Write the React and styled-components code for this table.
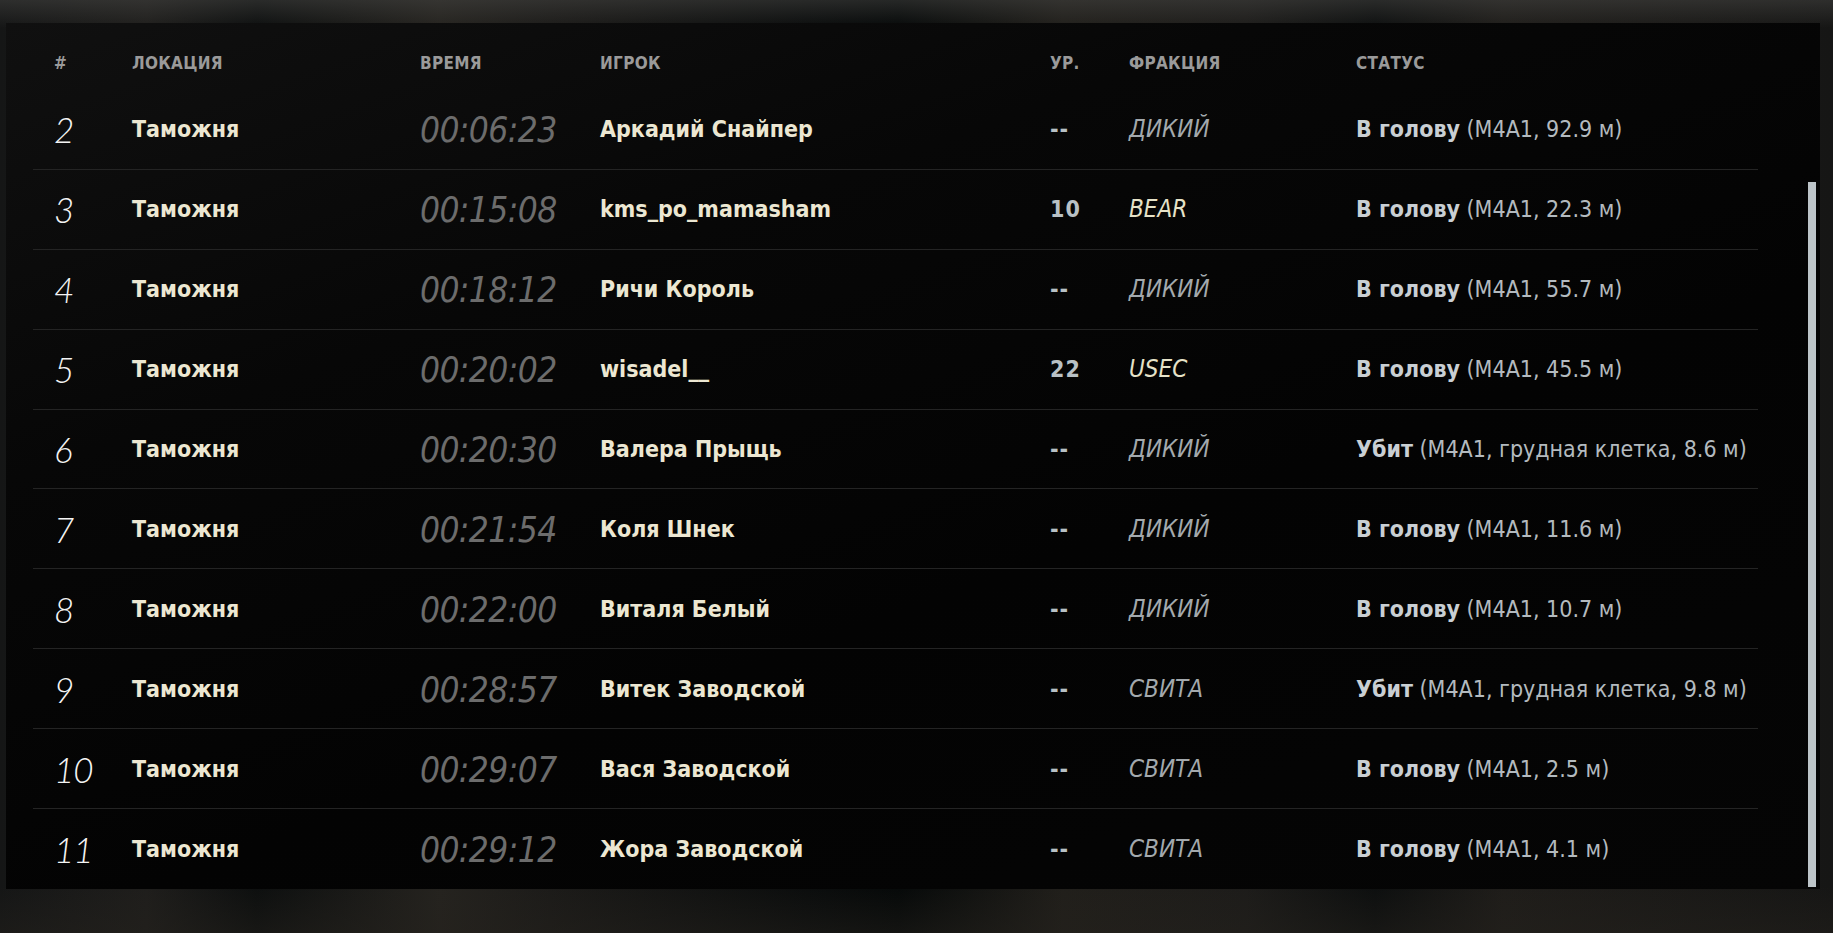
import React from 'react';
import styled, { createGlobalStyle } from 'styled-components';

const GlobalStyle = createGlobalStyle`
  html, body {
    margin: 0;
    padding: 0;
    height: 100%;
  }
  body {
    background: #141414;
    font-family: 'Liberation Sans Narrow', 'DejaVu Sans Condensed', Roboto, sans-serif;
    overflow: hidden;
  }
`;

const rows = [
  { n: 2, loc: 'Таможня', time: '00:06:23', player: 'Аркадий Снайпер', lvl: '--', faction: 'ДИКИЙ', pmc: false, verdict: 'В голову', detail: '(M4A1, 92.9 м)' },
  { n: 3, loc: 'Таможня', time: '00:15:08', player: 'kms_po_mamasham', lvl: '10', faction: 'BEAR', pmc: true, verdict: 'В голову', detail: '(M4A1, 22.3 м)' },
  { n: 4, loc: 'Таможня', time: '00:18:12', player: 'Ричи Король', lvl: '--', faction: 'ДИКИЙ', pmc: false, verdict: 'В голову', detail: '(M4A1, 55.7 м)' },
  { n: 5, loc: 'Таможня', time: '00:20:02', player: 'wisadel__', lvl: '22', faction: 'USEC', pmc: true, verdict: 'В голову', detail: '(M4A1, 45.5 м)' },
  { n: 6, loc: 'Таможня', time: '00:20:30', player: 'Валера Прыщь', lvl: '--', faction: 'ДИКИЙ', pmc: false, verdict: 'Убит', detail: '(M4A1, грудная клетка, 8.6 м)' },
  { n: 7, loc: 'Таможня', time: '00:21:54', player: 'Коля Шнек', lvl: '--', faction: 'ДИКИЙ', pmc: false, verdict: 'В голову', detail: '(M4A1, 11.6 м)' },
  { n: 8, loc: 'Таможня', time: '00:22:00', player: 'Виталя Белый', lvl: '--', faction: 'ДИКИЙ', pmc: false, verdict: 'В голову', detail: '(M4A1, 10.7 м)' },
  { n: 9, loc: 'Таможня', time: '00:28:57', player: 'Витек Заводской', lvl: '--', faction: 'СВИТА', pmc: false, verdict: 'Убит', detail: '(M4A1, грудная клетка, 9.8 м)' },
  { n: 10, loc: 'Таможня', time: '00:29:07', player: 'Вася Заводской', lvl: '--', faction: 'СВИТА', pmc: false, verdict: 'В голову', detail: '(M4A1, 2.5 м)' },
  { n: 11, loc: 'Таможня', time: '00:29:12', player: 'Жора Заводской', lvl: '--', faction: 'СВИТА', pmc: false, verdict: 'В голову', detail: '(M4A1, 4.1 м)' },
];

const App = () => {
  return (
    <>
      <GlobalStyle />
      <Screen>
        <Panel>
          <Table>
            <HeadRow>
              <HeadCell>#</HeadCell>
              <HeadCell>Локация</HeadCell>
              <HeadCell>Время</HeadCell>
              <HeadCell>Игрок</HeadCell>
              <HeadCell>Ур.</HeadCell>
              <HeadCell>Фракция</HeadCell>
              <HeadCell>Статус</HeadCell>
            </HeadRow>
            {rows.map((r, i) => (
              <Row key={r.n} last={i === rows.length - 1}>
                <Num>{r.n}</Num>
                <Name>{r.loc}</Name>
                <Time>{r.time}</Time>
                <Name>{r.player}</Name>
                <Level>{r.lvl}</Level>
                <Faction pmc={r.pmc}>{r.faction}</Faction>
                <Status>
                  <b>{r.verdict}</b> {r.detail}
                </Status>
              </Row>
            ))}
          </Table>
          <ScrollTrack>
            <ScrollThumb />
          </ScrollTrack>
        </Panel>
      </Screen>
    </>
  );
};

export default App;

// фон за панелью — размытые вертикальные полосы
const Screen = styled.div`
  height: 933px;
  box-sizing: border-box;
  padding: 23px 13px 44px 6px;
  display: flex;
  background:
    linear-gradient(180deg, rgba(70, 70, 68, 0.5) 0%, rgba(20, 20, 20, 0) 3%, rgba(0, 0, 0, 0) 95%, rgba(36, 33, 28, 0.45) 100%),
    linear-gradient(90deg, #151616 0%, #1f1e1c 8%, #0d0f0f 14%, #25231f 24%, #1c1b19 30%, #0b0d0d 44%, #060909 49%, #211f1b 58%, #1d1c1a 68%, #0d0f0f 75%, #1f1d1a 82%, #161615 100%);
`;

const Panel = styled.div`
  flex: 1;
  display: flex;
  background: linear-gradient(160deg, #101010 0%, #070707 30%, #030303 60%, #050505 100%);
  overflow: hidden;
`;

const Table = styled.div`
  width: 1725px;
  padding-left: 27px;
  display: flex;
  flex-direction: column;
`;

const Grid = styled.div`
  display: grid;
  grid-template-columns: 78px 288px 180px 450px 79px 227px 1fr;
  align-items: center;
  padding-left: 21px;
`;

const HeadRow = styled(Grid)`
  height: 67px;
  box-sizing: border-box;
  padding-top: 14px;
`;

const HeadCell = styled.div`
  font-weight: 700;
  font-size: 17px;
  text-transform: uppercase;
  color: #9a9a9a;
  letter-spacing: 0.3px;
`;

const Row = styled(Grid)`
  height: 80px;
  box-sizing: border-box;
  border-bottom: 1px solid ${(p) => (p.last ? 'transparent' : '#242424')};
`;

const Num = styled.div`
  font-family: Lato, 'Open Sans', sans-serif;
  font-weight: 300;
  font-style: italic;
  font-size: 35px;
  color: #f4f4f4;
  letter-spacing: -1px;
`;

const Name = styled.div`
  font-weight: 700;
  font-size: 23px;
  color: #ece7d2;
`;

const Time = styled.div`
  font-style: italic;
  font-size: 35px;
  color: #6c6c6c;
  letter-spacing: -0.6px;
  padding-top: 2px;
`;

const Level = styled.div`
  font-weight: 700;
  font-size: 23px;
  color: #b9c1c5;
  letter-spacing: 1px;
`;

const Faction = styled.div`
  font-style: italic;
  font-size: 24px;
  color: ${(p) => (p.pmc ? '#e6e2c8' : '#a3a9ad')};
`;

const Status = styled.div`
  font-size: 23px;
  color: #b3babf;
  white-space: nowrap;

  b {
    color: #c9cfd3;
  }
`;

const ScrollTrack = styled.div`
  margin-left: auto;
  margin-right: 4px;
  width: 8px;
  display: flex;
  flex-direction: column;
  padding-top: 159px;
  padding-bottom: 2px;
`;

const ScrollThumb = styled.div`
  flex: 1;
  background: #bcc4c8;
`;
